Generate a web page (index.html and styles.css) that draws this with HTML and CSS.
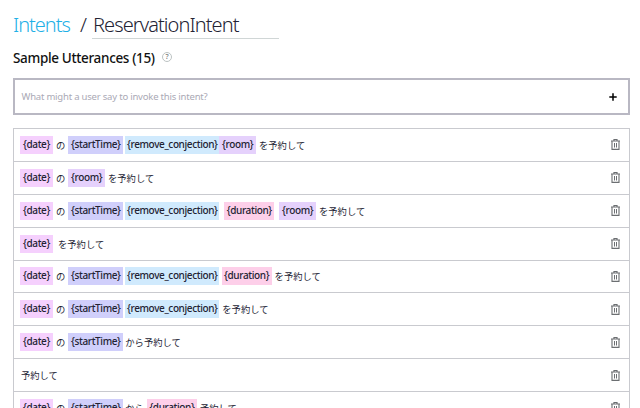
FILE: index.html
```
<!DOCTYPE html>
<html lang="ja">
<head>
<meta charset="utf-8">
<title>ReservationIntent</title>
<link rel="stylesheet" href="styles.css">
</head>
<body>
<svg class="defs" aria-hidden="true"><symbol id="trash" viewBox="0 0 9 11"><path d="M3 1.5V.5h3v1M0 2h9" fill="none" stroke="currentColor" stroke-width="1.2"/><path d="M1 2v8.4h7V2" fill="none" stroke="currentColor" stroke-width="1.1"/><path d="M3.5 4v4.5M5.5 4v4.5" fill="none" stroke="currentColor"/></symbol></svg>
<main>
<h1><a class="crumb">Intents</a><span class="slash">/</span><span class="name"><span class="name-text">ReservationIntent</span></span></h1>
<h2><span class="heading">Sample Utterances (15)</span><span class="help">?</span></h2>
<div class="entry"><span class="hint">What might a user say to invoke this intent?</span><svg class="plus" viewBox="0 0 8 8"><path d="M4 .3v7.4M.3 4h7.4" stroke="currentColor" stroke-width="1.5"/></svg></div>
<div class="list">
<div class="row"><b class="date">{date}</b><i>の</i><b class="start">{startTime}</b><b class="remove">{remove_conjection}</b><b class="room flush">{room}</b><i>を予約して</i><svg class="trash"><use href="#trash"/></svg></div>
<div class="row"><b class="date">{date}</b><i>の</i><b class="room">{room}</b><i>を予約して</i><svg class="trash"><use href="#trash"/></svg></div>
<div class="row"><b class="date">{date}</b><i>の</i><b class="start">{startTime}</b><b class="remove">{remove_conjection}</b><b class="duration wide">{duration}</b><b class="room wide">{room}</b><i>を予約して</i><svg class="trash"><use href="#trash"/></svg></div>
<div class="row"><b class="date">{date}</b><i class="wide">を予約して</i><svg class="trash"><use href="#trash"/></svg></div>
<div class="row"><b class="date">{date}</b><i>の</i><b class="start">{startTime}</b><b class="remove">{remove_conjection}</b><b class="duration">{duration}</b><i>を予約して</i><svg class="trash"><use href="#trash"/></svg></div>
<div class="row"><b class="date">{date}</b><i>の</i><b class="start">{startTime}</b><b class="remove">{remove_conjection}</b><i>を予約して</i><svg class="trash"><use href="#trash"/></svg></div>
<div class="row"><b class="date">{date}</b><i>の</i><b class="start">{startTime}</b><i class="near">から予約して</i><svg class="trash"><use href="#trash"/></svg></div>
<div class="row"><i class="first">予約して</i><svg class="trash"><use href="#trash"/></svg></div>
<div class="row"><b class="date">{date}</b><i>の</i><b class="start">{startTime}</b><i class="near">から</i><b class="duration">{duration}</b><i>予約して</i><svg class="trash"><use href="#trash"/></svg></div>
</div>
</main>
</body>
</html>
```
FILE: styles.css
```
* { box-sizing: border-box; }
html, body { height: 408px; margin: 0; overflow: hidden; background: #fff; }
body { font-family: "Noto Sans", "Noto Sans CJK JP", sans-serif; color: #232333; }
.defs { position: absolute; width: 0; height: 0; }
main { padding: 12px 10px 0 13px; }
h1 { display: flex; height: 27px; margin: 0; font: 300 20px/26px "Noto Sans", sans-serif; white-space: nowrap; }
.crumb { width: 67px; color: #1fb0e6; letter-spacing: -1.05px; }
.slash { width: 12px; }
.name { width: 187px; padding-left: 1px; border-bottom: 1px solid #d0d6d6; }
.name-text { letter-spacing: -.93px; }
h2 { display: flex; align-items: center; height: 20px; margin: 9px 0 0; font: 500 13.5px/20px "Noto Sans", sans-serif; color: #111; }
.heading { width: 149px; letter-spacing: -.34px; white-space: nowrap; }
.help { width: 10px; height: 10px; margin-top: -2px; border: 1px solid #bcc3c3; border-radius: 50%; font-size: 7px; line-height: 8px; text-align: center; color: #777; }
.entry { display: flex; align-items: center; justify-content: space-between; height: 37px; margin-top: 10px; padding: 0 11px 0 6.5px; border: 2px solid #b9b8c3; }
.hint { font-size: 9.5px; color: #aaa9b5; letter-spacing: -.2px; }
.plus { width: 8px; height: 8px; color: #000; }
.list { margin-top: 13px; border: solid #c9cacf; border-width: 1px 1px 0; }
.row { display: flex; align-items: center; height: 32.88px; padding: 0 9px 0 6px; border-bottom: 1px solid #c9cacf; font-size: 10px; white-space: nowrap; }
.row b { height: 18px; margin-left: 2.3px; font-weight: 500; line-height: 17px; text-align: center; letter-spacing: -.38px; }
.row i { margin: 0 3px; font-family: "Noto Sans CJK JP", sans-serif; font-size: 9.3px; font-style: normal; line-height: 18px; transform: translateY(-.5px); }
.row i + b { margin-left: 0; }
.row .date { width: 33px; margin-left: 0; background: #f5d0fd; }
.start { width: 55px; background: #d0cffb; }
.row .remove { width: 94px; margin-left: 2px; background: #d0eafd; }
.room { width: 36.7px; background: #e5d1fc; }
.duration { width: 50px; background: #fdcfe9; }
.row .flush { margin-left: 0; }
.row .wide { margin-left: 5px; }
.row .near { margin-left: 2px; }
.row .first { margin-left: 1px; }
.trash { width: 9px; height: 11px; margin-left: auto; color: #6c6f72; }
```
